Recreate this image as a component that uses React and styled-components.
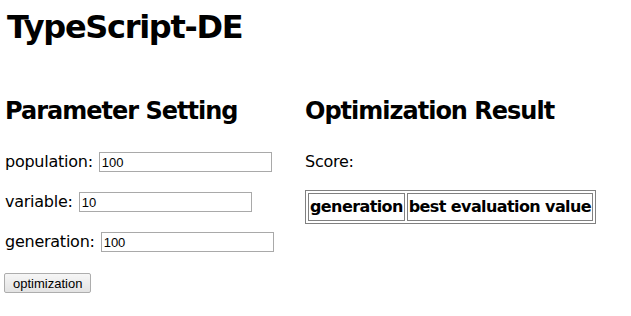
import React from 'react'
import styled, { createGlobalStyle } from 'styled-components'

const GlobalStyle = createGlobalStyle`
  body {
    margin: 0;
    background: #fff;
    color: #000;
    font-family: 'DejaVu Sans', Verdana, sans-serif;
  }
`

const params = [
  { label: 'population', value: '100' },
  { label: 'variable', value: '10' },
  { label: 'generation', value: '100' },
]

const App = () => {
  return (
    <Page>
      <GlobalStyle />
      <Title>TypeScript-DE</Title>
      <Columns>
        <section>
          <Heading>Parameter Setting</Heading>
          {params.map((p) => (
            <Row key={p.label}>
              <Label>{p.label}:</Label>
              <Input type='text' defaultValue={p.value} />
            </Row>
          ))}
          <Button type='button'>optimization</Button>
        </section>
        <section>
          <Heading>Optimization Result</Heading>
          <Row>
            <Label>Score:</Label>
          </Row>
          <Table>
            <thead>
              <tr>
                <th>generation</th>
                <th>best evaluation value</th>
              </tr>
            </thead>
          </Table>
        </section>
      </Columns>
    </Page>
  )
}

const Page = styled.main`
  padding: 3px 5px 0;
`

const Title = styled.h1`
  margin: 0 0 0 2px;
  font-size: 32px;
  line-height: 48px;
  font-weight: bold;
  letter-spacing: -1.3px;
`

const Columns = styled.div`
  display: grid;
  grid-template-columns: 300px auto;
  margin-top: 44px;
`

const Heading = styled.h2`
  margin: 0 0 23px;
  font-size: 24px;
  line-height: 32px;
  font-weight: bold;
  letter-spacing: -1px;
`

const Row = styled.div`
  display: flex;
  align-items: center;
  height: 24px;
  margin-bottom: 16px;
`

const Label = styled.span`
  font-size: 16px;
  line-height: 24px;
  letter-spacing: -0.25px;
  margin-right: 6px;
`

const Input = styled.input`
  box-sizing: border-box;
  width: 173px;
  height: 20px;
  padding: 1px 2px;
  border: 1px solid #a9a9a9;
  font-family: 'Liberation Sans', Arial, sans-serif;
  font-size: 13px;
  color: #000;
  outline: none;
`

const Button = styled.button`
  display: block;
  box-sizing: border-box;
  margin: 19px 0 0 -1px;
  height: 20px;
  padding: 0 8px;
  border: 1px solid #adadad;
  border-radius: 2px;
  background: linear-gradient(#f6f6f6, #e3e3e3);
  font-family: 'Liberation Sans', Arial, sans-serif;
  font-size: 13px;
  color: #000;
`

const Table = styled.table`
  border: 1px solid #808080;
  border-spacing: 2px;
  th {
    border: 1px solid #808080;
    padding: 1px;
    font-size: 16px;
    line-height: 24px;
    font-weight: bold;
    letter-spacing: -0.6px;
  }
`

export default App
